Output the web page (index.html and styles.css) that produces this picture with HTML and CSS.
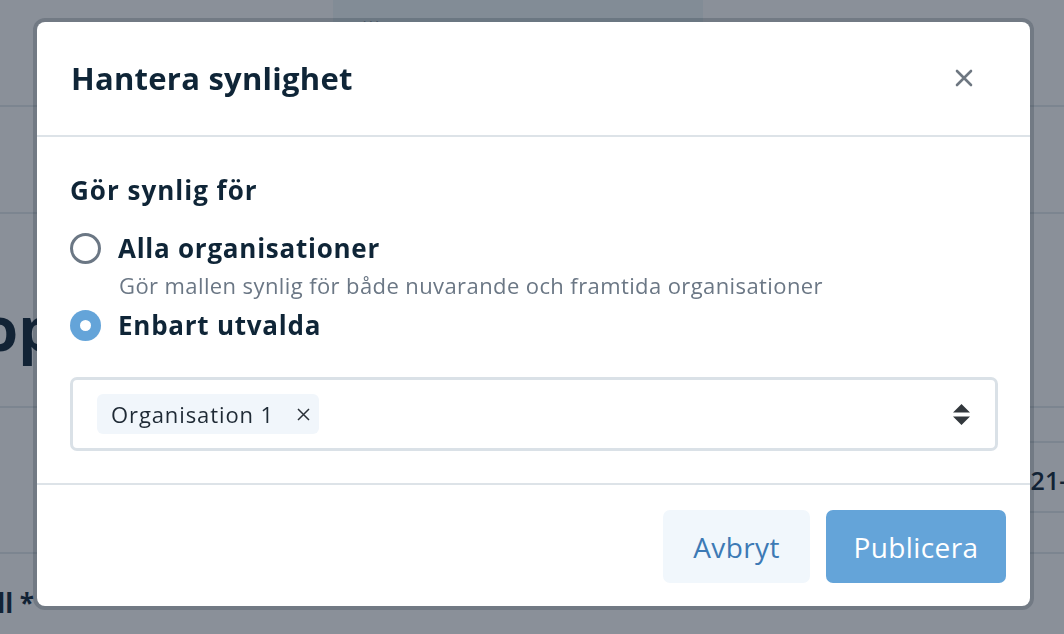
FILE: index.html
```
<!DOCTYPE html>
<html lang="sv">
<head>
<meta charset="utf-8">
<title>Hantera synlighet</title>
<link rel="stylesheet" href="styles.css">
</head>
<body>
<div class="page">
  <header class="topbar">
    <div class="tab"><span class="dots">•••</span></div>
  </header>
  <div class="subbar"></div>
  <main class="content">
    <h1 class="page-title">op</h1>
    <div class="field-row">
      <div class="date-input">2021-</div>
    </div>
    <div class="label-row"><span class="field-label">Mall *</span></div>
  </main>
</div>

<div class="overlay">
  <div class="modal" role="dialog" aria-labelledby="modal-title">
    <div class="modal-header">
      <h2 id="modal-title" class="modal-title">Hantera synlighet</h2>
      <button class="close-btn" aria-label="Stäng">
        <svg width="18" height="18" viewBox="0 0 18 18"><path d="M2 2 L16 16 M16 2 L2 16" stroke="currentColor" stroke-width="2.6" stroke-linecap="round" fill="none"/></svg>
      </button>
    </div>
    <div class="modal-body">
      <div class="group-label">Gör synlig för</div>
      <label class="option">
        <span class="radio"></span>
        <span class="option-title">Alla organisationer</span>
      </label>
      <div class="option-desc">Gör mallen synlig för både nuvarande och framtida organisationer</div>
      <label class="option option-second">
        <span class="radio radio-checked"></span>
        <span class="option-title">Enbart utvalda</span>
      </label>
      <div class="select">
        <div class="tags">
          <span class="tag">Organisation 1
            <svg class="tag-x" width="13" height="13" viewBox="0 0 13 13"><path d="M1 1 L12 12 M12 1 L1 12" stroke="currentColor" stroke-width="1.5" fill="none"/></svg>
          </span>
        </div>
        <svg class="sort-icon" width="17" height="21" viewBox="0 0 17 21"><path d="M8.5 0 L17 8.5 L0 8.5 Z M0 12.5 L17 12.5 L8.5 21 Z" fill="currentColor"/></svg>
      </div>
    </div>
    <div class="modal-footer">
      <button class="btn btn-secondary">Avbryt</button>
      <button class="btn btn-primary">Publicera</button>
    </div>
  </div>
</div>
</body>
</html>
```
FILE: styles.css
```
* { box-sizing: border-box; }
html, body { margin: 0; padding: 0; }
body {
  width: 1064px;
  height: 634px;
  overflow: hidden;
  background: #ffffff;
  font-family: "Open Sans", "Noto Sans", sans-serif;
  color: #0f2537;
}

/* background page */
.page { width: 1064px; overflow: hidden; }
.topbar {
  height: 107px;
  border-bottom: 2px solid #e3e8ec;
  display: flex;
}
.tab {
  margin-left: 333px;
  width: 370px;
  height: 60px;
  background: #eef7f9;
  border-radius: 0 0 8px 8px;
  padding: 12px 0 0 29px;
}
.dots { font-size: 14px; color: #0f2537; letter-spacing: 1px; }
.subbar {
  height: 107px;
  border-bottom: 2px solid #e3e8ec;
}
.page-title {
  margin: 0 0 0 -19px;
  height: 194px;
  padding-top: 84px;
  font-size: 60px;
  font-weight: 700;
  line-height: 60px;
  border-bottom: 2px solid #e3e8ec;
}
.field-row {
  height: 146px;
  padding-top: 33px;
  border-bottom: 2px solid #e3e8ec;
  display: flex;
  justify-content: flex-end;
}
.date-input {
  width: 160px;
  height: 72px;
  margin-right: -60px;
  border: 2px solid #e3e8ec;
  border-radius: 6px;
  font-size: 25px;
  font-weight: 600;
  line-height: 74px;
  padding-left: 36px;
  color: #0f2537;
  white-space: nowrap;
}
.label-row {
  width: 34px;
  display: flex;
  justify-content: flex-end;
  padding-top: 34px;
}
.field-label {
  white-space: nowrap;
  font-size: 26px;
  font-weight: 700;
  line-height: 30px;
}

/* overlay + modal */
.overlay {
  position: fixed;
  inset: 0;
  background: rgba(21, 33, 51, 0.5);
  padding: 22px 0 0 37px;
}
.modal {
  width: 993px;
  height: 584px;
  background: #ffffff;
  border-radius: 8px;
  box-shadow: 0 0 0 4px rgba(21, 33, 51, 0.2);
  display: flex;
  flex-direction: column;
}
.modal-header {
  height: 115px;
  border-bottom: 2px solid #dde3e8;
  display: flex;
  align-items: center;
  justify-content: space-between;
  padding: 0 57px 2px 34px;
}
.modal-title {
  margin: 0;
  font-size: 31px;
  font-weight: 700;
  letter-spacing: 0.25px;
  color: #0f2537;
  line-height: 40px;
}
.close-btn {
  border: 0;
  background: none;
  padding: 0;
  width: 18px;
  height: 18px;
  color: #6e7781;
  display: flex;
}

.modal-body {
  padding: 37px 32px 32px 33px;
  border-bottom: 2px solid #dde3e8;
}
.group-label {
  font-size: 26px;
  font-weight: 700;
  letter-spacing: 1px;
  line-height: 32px;
  color: #0f2537;
}
.option {
  display: flex;
  align-items: center;
  gap: 17px;
  height: 36px;
  margin-top: 24px;
}
.option-second { margin-top: 8px; }
.radio {
  width: 31px;
  height: 31px;
  border-radius: 50%;
  border: 3px solid #6b7784;
  flex: none;
  display: flex;
  align-items: center;
  justify-content: center;
}
.radio-checked {
  border: 0;
  background: #64a4d9;
}
.radio-checked::after {
  content: "";
  width: 11px;
  height: 11px;
  border-radius: 50%;
  background: #ffffff;
}
.option-title {
  font-size: 26px;
  font-weight: 700;
  letter-spacing: 0.75px;
  color: #0f2537;
  line-height: 32px;
}
.option-desc {
  margin: 5px 0 0 49px;
  font-size: 22px;
  letter-spacing: 0.4px;
  line-height: 28px;
  color: #6b7785;
}
.select {
  margin-top: 34px;
  height: 74px;
  border: 3px solid #dae1e7;
  border-radius: 7px;
  display: flex;
  align-items: center;
  justify-content: space-between;
  padding: 0 25px 0 24px;
}
.tag {
  display: inline-flex;
  align-items: center;
  gap: 23px;
  height: 40px;
  padding: 0 9px 0 14px;
  background: #f1f6fb;
  border-radius: 6px;
  font-size: 22px;
  letter-spacing: 0.9px;
  color: #1f2a35;
}
.tag-x { color: #2a3038; }
.sort-icon { color: #33383d; }

.modal-footer {
  flex: 1;
  display: flex;
  justify-content: flex-end;
  align-items: flex-start;
  gap: 16px;
  padding: 25px 24px 0 0;
}
.btn {
  height: 73px;
  border: 0;
  border-radius: 7px;
  font-family: "Open Sans", "Noto Sans", sans-serif;
  font-size: 28px;
  font-weight: 500;
  letter-spacing: 0.4px;
  padding: 0;
}
.btn-secondary {
  width: 147px;
  background: #f1f7fc;
  color: #3d7ab5;
}
.btn-primary {
  width: 180px;
  background: #64a4d9;
  color: #ffffff;
}
```
